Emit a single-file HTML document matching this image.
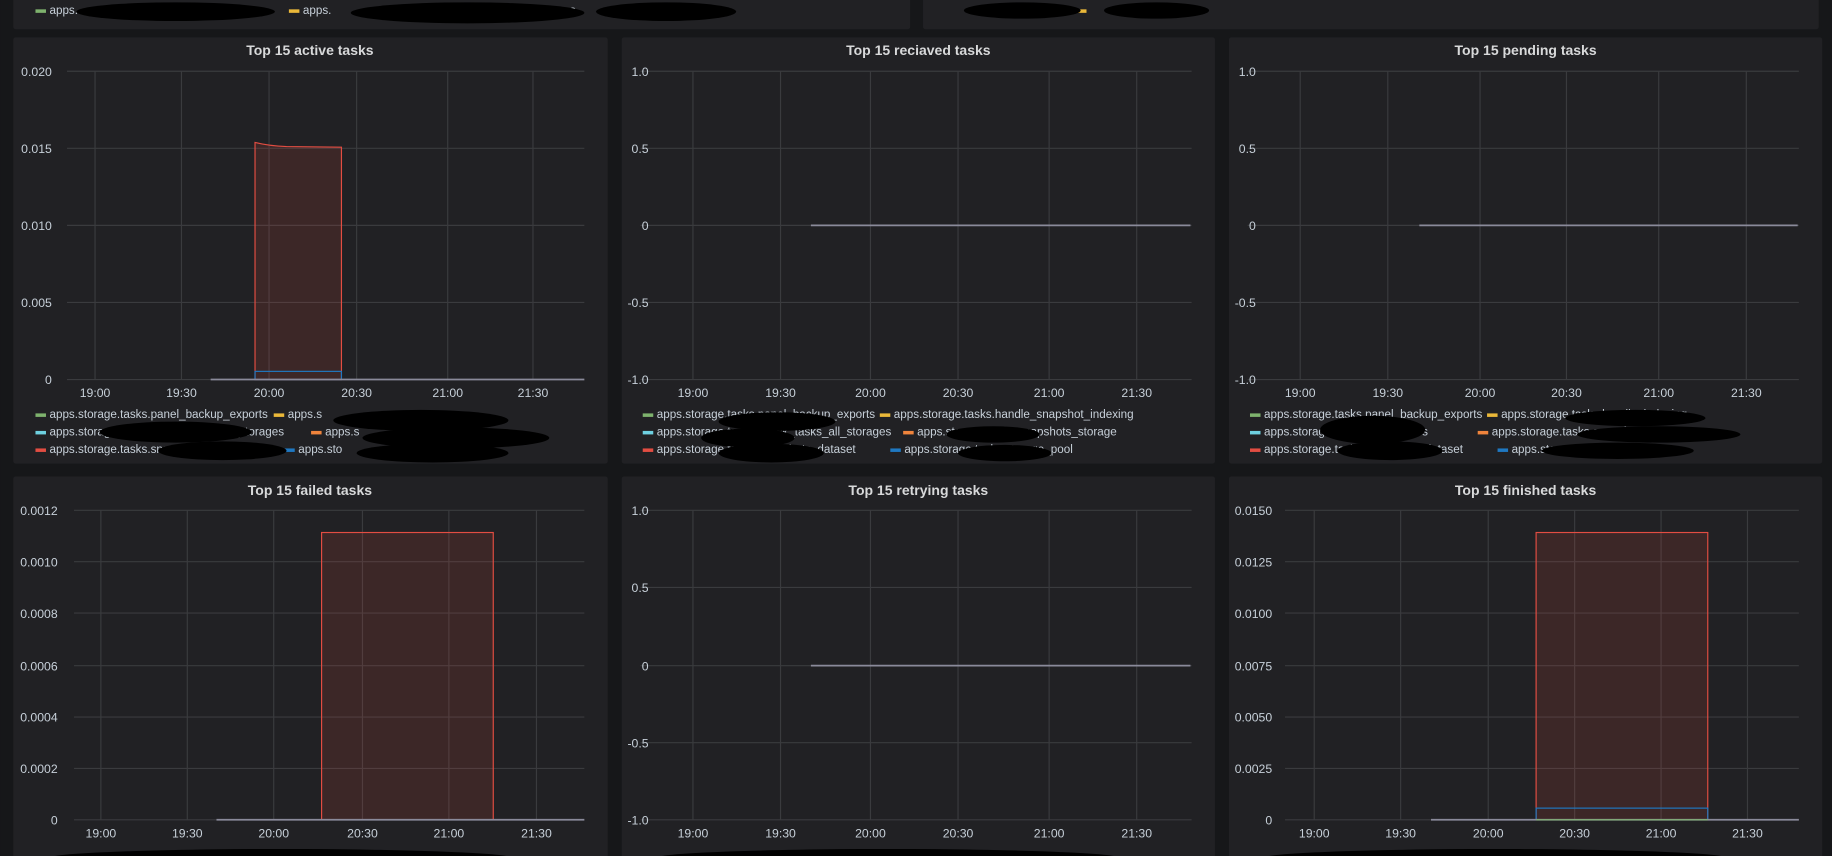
<!DOCTYPE html>
<html><head><meta charset="utf-8"><style>
html,body{margin:0;padding:0;background:#161719;width:1832px;height:856px;overflow:hidden}
svg{display:block}
text{font-family:"Liberation Sans",sans-serif}
.t{fill:#d8d9da;font-size:12px;font-weight:bold;text-anchor:middle}
.y{fill:#c7d0d9;font-size:10.5px;text-anchor:end}
.x{fill:#c7d0d9;font-size:10.5px;text-anchor:middle}
.l{fill:#c7d0d9;font-size:10px}
.g{stroke:#3a3b3e;stroke-width:1}
</style></head><body>
<svg width="1832" height="856" viewBox="0 0 1568 733" xmlns="http://www.w3.org/2000/svg">
<rect width="1568" height="733" fill="#161719"/>
<!-- top partial panels -->
<rect x="11" y="-5" width="768" height="30" rx="2" fill="#212124"/>
<rect x="790" y="-5" width="767" height="30" rx="2" fill="#212124"/>
<rect x="30" y="8" width="9" height="3" fill="#7eb26d"/><text class="l" x="42" y="12">apps.</text>
<rect x="247" y="8" width="9" height="3" fill="#eab839"/><text class="l" x="259" y="12">apps.</text>
<rect x="459" y="8" width="9" height="3" fill="#6ed0e0"/><text class="l" x="471" y="12">apps.</text>
<rect x="921" y="8" width="9" height="3" fill="#eab839"/>
<ellipse cx="150" cy="10" rx="85" ry="8" fill="#000"/>
<ellipse cx="400" cy="11" rx="100" ry="9" fill="#000"/>
<ellipse cx="570" cy="10" rx="60" ry="8" fill="#000"/>
<ellipse cx="875" cy="9" rx="50" ry="7" fill="#000"/>
<ellipse cx="990" cy="9" rx="45" ry="7" fill="#000"/>

<!-- row 2 panels -->
<rect x="11" y="32" width="509" height="365" rx="2" fill="#212124"/>
<rect x="532" y="32" width="508" height="365" rx="2" fill="#212124"/>
<rect x="1052" y="32" width="508" height="365" rx="2" fill="#212124"/>
<rect x="11" y="408" width="509" height="330" rx="2" fill="#212124"/>
<rect x="532" y="408" width="508" height="330" rx="2" fill="#212124"/>
<rect x="1052" y="408" width="508" height="330" rx="2" fill="#212124"/>

<!-- Panel 1 active -->
<text class="t" x="265" y="47">Top 15 active tasks</text>
<g class="g">
<line x1="57" y1="61" x2="500" y2="61"/><line x1="57" y1="127" x2="500" y2="127"/><line x1="57" y1="193" x2="500" y2="193"/><line x1="57" y1="259" x2="500" y2="259"/><line x1="57" y1="325" x2="500" y2="325"/>
<line x1="81" y1="61" x2="81" y2="325"/><line x1="155" y1="61" x2="155" y2="325"/><line x1="230" y1="61" x2="230" y2="325"/><line x1="305" y1="61" x2="305" y2="325"/><line x1="383" y1="61" x2="383" y2="325"/><line x1="456" y1="61" x2="456" y2="325"/>
</g>
<text class="y" x="44" y="65">0.020</text><text class="y" x="44" y="131">0.015</text><text class="y" x="44" y="197">0.010</text><text class="y" x="44" y="263">0.005</text><text class="y" x="44" y="329">0</text>
<text class="x" x="81" y="340">19:00</text><text class="x" x="155" y="340">19:30</text><text class="x" x="230" y="340">20:00</text><text class="x" x="305" y="340">20:30</text><text class="x" x="383" y="340">21:00</text><text class="x" x="456" y="340">21:30</text>
<path d="M218,325 L218,122 Q230,125 245,125.5 L292,126 L292,325 Z" fill="rgba(226,77,66,0.14)" stroke="#e24d42" stroke-width="1"/>
<rect x="218" y="318" width="74" height="7" fill="none" stroke="#1f78c1"/>
<line x1="180" y1="325" x2="500" y2="325" stroke="#8a8a9a" stroke-width="1.5"/>
<rect x="30" y="354" width="9" height="3" fill="#7eb26d"/><text class="l" x="42" y="358">apps.storage.tasks.panel_backup_exports</text>
<rect x="234" y="354" width="9" height="3" fill="#eab839"/><text class="l" x="246" y="358">apps.s</text>
<rect x="30" y="369" width="9" height="3" fill="#6ed0e0"/><text class="l" x="42" y="373">apps.storage.tasks.check_tasks_all_storages</text>
<rect x="266" y="369" width="9" height="3" fill="#ef843c"/><text class="l" x="278" y="373">apps.s</text>
<rect x="30" y="384" width="9" height="3" fill="#e24d42"/><text class="l" x="42" y="388">apps.storage.tasks.snapshots_dataset</text>
<rect x="243" y="384" width="9" height="3" fill="#1f78c1"/><text class="l" x="255" y="388">apps.sto</text>
<ellipse cx="150" cy="370" rx="65" ry="9" fill="#000"/>
<ellipse cx="190" cy="386" rx="55" ry="8" fill="#000"/>
<ellipse cx="360" cy="360" rx="75" ry="9" fill="#000"/>
<ellipse cx="390" cy="375" rx="80" ry="9" fill="#000"/>
<ellipse cx="370" cy="388" rx="65" ry="8" fill="#000"/>

<!-- Panel 2 received -->
<text class="t" x="786" y="47">Top 15 reciaved tasks</text>
<g class="g">
<line x1="548" y1="61" x2="1020" y2="61"/><line x1="548" y1="127" x2="1020" y2="127"/><line x1="548" y1="193" x2="1020" y2="193"/><line x1="548" y1="259" x2="1020" y2="259"/><line x1="548" y1="325" x2="1020" y2="325"/>
<line x1="593" y1="61" x2="593" y2="325"/><line x1="668" y1="61" x2="668" y2="325"/><line x1="745" y1="61" x2="745" y2="325"/><line x1="820" y1="61" x2="820" y2="325"/><line x1="898" y1="61" x2="898" y2="325"/><line x1="973" y1="61" x2="973" y2="325"/>
</g>
<text class="y" x="555" y="65">1.0</text><text class="y" x="555" y="131">0.5</text><text class="y" x="555" y="197">0</text><text class="y" x="555" y="263">-0.5</text><text class="y" x="555" y="329">-1.0</text>
<text class="x" x="593" y="340">19:00</text><text class="x" x="668" y="340">19:30</text><text class="x" x="745" y="340">20:00</text><text class="x" x="820" y="340">20:30</text><text class="x" x="898" y="340">21:00</text><text class="x" x="973" y="340">21:30</text>
<line x1="694" y1="193" x2="1019" y2="193" stroke="#8a8a9a" stroke-width="1.5"/>
<rect x="550" y="354" width="9" height="3" fill="#7eb26d"/><text class="l" x="562" y="358">apps.storage.tasks.panel_backup_exports</text>
<rect x="753" y="354" width="9" height="3" fill="#eab839"/><text class="l" x="765" y="358">apps.storage.tasks.handle_snapshot_indexing</text>
<rect x="550" y="369" width="9" height="3" fill="#6ed0e0"/><text class="l" x="562" y="373">apps.storage.tasks.check_tasks_all_storages</text>
<rect x="773" y="369" width="9" height="3" fill="#ef843c"/><text class="l" x="785" y="373">apps.storage.tasks.snapshots_storage</text>
<rect x="550" y="384" width="9" height="3" fill="#e24d42"/><text class="l" x="562" y="388">apps.storage.tasks.snapshots_dataset</text>
<rect x="762" y="384" width="9" height="3" fill="#1f78c1"/><text class="l" x="774" y="388">apps.storage.tasks.storage_pool</text>
<ellipse cx="665" cy="361" rx="50" ry="8" fill="#000"/>
<ellipse cx="640" cy="375" rx="40" ry="8" fill="#000"/>
<ellipse cx="660" cy="388" rx="45" ry="8" fill="#000"/>
<ellipse cx="850" cy="372" rx="40" ry="7" fill="#000"/>
<ellipse cx="860" cy="388" rx="40" ry="7" fill="#000"/>

<!-- Panel 3 pending -->
<text class="t" x="1306" y="47">Top 15 pending tasks</text>
<g class="g">
<line x1="1068" y1="61" x2="1540" y2="61"/><line x1="1068" y1="127" x2="1540" y2="127"/><line x1="1068" y1="193" x2="1540" y2="193"/><line x1="1068" y1="259" x2="1540" y2="259"/><line x1="1068" y1="325" x2="1540" y2="325"/>
<line x1="1113" y1="61" x2="1113" y2="325"/><line x1="1188" y1="61" x2="1188" y2="325"/><line x1="1267" y1="61" x2="1267" y2="325"/><line x1="1341" y1="61" x2="1341" y2="325"/><line x1="1420" y1="61" x2="1420" y2="325"/><line x1="1495" y1="61" x2="1495" y2="325"/>
</g>
<text class="y" x="1075" y="65">1.0</text><text class="y" x="1075" y="131">0.5</text><text class="y" x="1075" y="197">0</text><text class="y" x="1075" y="263">-0.5</text><text class="y" x="1075" y="329">-1.0</text>
<text class="x" x="1113" y="340">19:00</text><text class="x" x="1188" y="340">19:30</text><text class="x" x="1267" y="340">20:00</text><text class="x" x="1341" y="340">20:30</text><text class="x" x="1420" y="340">21:00</text><text class="x" x="1495" y="340">21:30</text>
<line x1="1215" y1="193" x2="1539" y2="193" stroke="#8a8a9a" stroke-width="1.5"/>
<rect x="1070" y="354" width="9" height="3" fill="#7eb26d"/><text class="l" x="1082" y="358">apps.storage.tasks.panel_backup_exports</text>
<rect x="1273" y="354" width="9" height="3" fill="#eab839"/><text class="l" x="1285" y="358">apps.storage.tasks.handle_indexing</text>
<rect x="1070" y="369" width="9" height="3" fill="#6ed0e0"/><text class="l" x="1082" y="373">apps.storage.tasks.all_storages</text>
<rect x="1265" y="369" width="9" height="3" fill="#ef843c"/><text class="l" x="1277" y="373">apps.storage.tasks.snapshots_storage</text>
<rect x="1070" y="384" width="9" height="3" fill="#e24d42"/><text class="l" x="1082" y="388">apps.storage.tasks.snapshots_dataset</text>
<rect x="1282" y="384" width="9" height="3" fill="#1f78c1"/><text class="l" x="1294" y="388">apps.storage.tasks.pool</text>
<ellipse cx="1175" cy="368" rx="45" ry="12" fill="#000"/>
<ellipse cx="1190" cy="386" rx="45" ry="8" fill="#000"/>
<ellipse cx="1400" cy="358" rx="60" ry="7" fill="#000"/>
<ellipse cx="1420" cy="372" rx="70" ry="7" fill="#000"/>
<ellipse cx="1385" cy="386" rx="65" ry="7" fill="#000"/>

<!-- Panel 4 failed -->
<text class="t" x="265" y="424">Top 15 failed tasks</text>
<g class="g">
<line x1="63" y1="437" x2="500" y2="437"/><line x1="63" y1="481" x2="500" y2="481"/><line x1="63" y1="525" x2="500" y2="525"/><line x1="63" y1="570" x2="500" y2="570"/><line x1="63" y1="614" x2="500" y2="614"/><line x1="63" y1="658" x2="500" y2="658"/><line x1="63" y1="702" x2="500" y2="702"/>
<line x1="86" y1="437" x2="86" y2="702"/><line x1="160" y1="437" x2="160" y2="702"/><line x1="234" y1="437" x2="234" y2="702"/><line x1="310" y1="437" x2="310" y2="702"/><line x1="384" y1="437" x2="384" y2="702"/><line x1="459" y1="437" x2="459" y2="702"/>
</g>
<text class="y" x="49" y="441">0.0012</text><text class="y" x="49" y="485">0.0010</text><text class="y" x="49" y="529">0.0008</text><text class="y" x="49" y="574">0.0006</text><text class="y" x="49" y="618">0.0004</text><text class="y" x="49" y="662">0.0002</text><text class="y" x="49" y="706">0</text>
<text class="x" x="86" y="717">19:00</text><text class="x" x="160" y="717">19:30</text><text class="x" x="234" y="717">20:00</text><text class="x" x="310" y="717">20:30</text><text class="x" x="384" y="717">21:00</text><text class="x" x="459" y="717">21:30</text>
<rect x="275" y="456" width="147" height="246" fill="rgba(226,77,66,0.14)" stroke="#e24d42"/>
<line x1="185" y1="702" x2="500" y2="702" stroke="#8a8a9a" stroke-width="1.5"/>
<ellipse cx="240" cy="735" rx="200" ry="8" fill="#000"/>

<!-- Panel 5 retrying -->
<text class="t" x="786" y="424">Top 15 retrying tasks</text>
<g class="g">
<line x1="548" y1="437" x2="1020" y2="437"/><line x1="548" y1="503" x2="1020" y2="503"/><line x1="548" y1="570" x2="1020" y2="570"/><line x1="548" y1="636" x2="1020" y2="636"/><line x1="548" y1="702" x2="1020" y2="702"/>
<line x1="593" y1="437" x2="593" y2="702"/><line x1="668" y1="437" x2="668" y2="702"/><line x1="745" y1="437" x2="745" y2="702"/><line x1="820" y1="437" x2="820" y2="702"/><line x1="898" y1="437" x2="898" y2="702"/><line x1="973" y1="437" x2="973" y2="702"/>
</g>
<text class="y" x="555" y="441">1.0</text><text class="y" x="555" y="507">0.5</text><text class="y" x="555" y="574">0</text><text class="y" x="555" y="640">-0.5</text><text class="y" x="555" y="706">-1.0</text>
<text class="x" x="593" y="717">19:00</text><text class="x" x="668" y="717">19:30</text><text class="x" x="745" y="717">20:00</text><text class="x" x="820" y="717">20:30</text><text class="x" x="898" y="717">21:00</text><text class="x" x="973" y="717">21:30</text>
<line x1="694" y1="570" x2="1019" y2="570" stroke="#8a8a9a" stroke-width="1.5"/>
<ellipse cx="760" cy="735" rx="200" ry="8" fill="#000"/>

<!-- Panel 6 finished -->
<text class="t" x="1306" y="424">Top 15 finished tasks</text>
<g class="g">
<line x1="1100" y1="437" x2="1540" y2="437"/><line x1="1100" y1="481" x2="1540" y2="481"/><line x1="1100" y1="525" x2="1540" y2="525"/><line x1="1100" y1="570" x2="1540" y2="570"/><line x1="1100" y1="614" x2="1540" y2="614"/><line x1="1100" y1="658" x2="1540" y2="658"/><line x1="1100" y1="702" x2="1540" y2="702"/>
<line x1="1125" y1="437" x2="1125" y2="702"/><line x1="1199" y1="437" x2="1199" y2="702"/><line x1="1274" y1="437" x2="1274" y2="702"/><line x1="1348" y1="437" x2="1348" y2="702"/><line x1="1422" y1="437" x2="1422" y2="702"/><line x1="1496" y1="437" x2="1496" y2="702"/>
</g>
<text class="y" x="1089" y="441">0.0150</text><text class="y" x="1089" y="485">0.0125</text><text class="y" x="1089" y="529">0.0100</text><text class="y" x="1089" y="574">0.0075</text><text class="y" x="1089" y="618">0.0050</text><text class="y" x="1089" y="662">0.0025</text><text class="y" x="1089" y="706">0</text>
<text class="x" x="1125" y="717">19:00</text><text class="x" x="1199" y="717">19:30</text><text class="x" x="1274" y="717">20:00</text><text class="x" x="1348" y="717">20:30</text><text class="x" x="1422" y="717">21:00</text><text class="x" x="1496" y="717">21:30</text>
<rect x="1315" y="456" width="147" height="246" fill="rgba(226,77,66,0.14)" stroke="#e24d42"/>
<rect x="1315" y="692" width="147" height="10" fill="none" stroke="#1f78c1"/>
<line x1="1225" y1="702" x2="1540" y2="702" stroke="#8a8a9a" stroke-width="1.5"/>
<line x1="1315" y1="702" x2="1462" y2="702" stroke="#7eb26d" stroke-width="1"/>
<ellipse cx="1280" cy="735" rx="200" ry="8" fill="#000"/>
</svg>
</body></html>
